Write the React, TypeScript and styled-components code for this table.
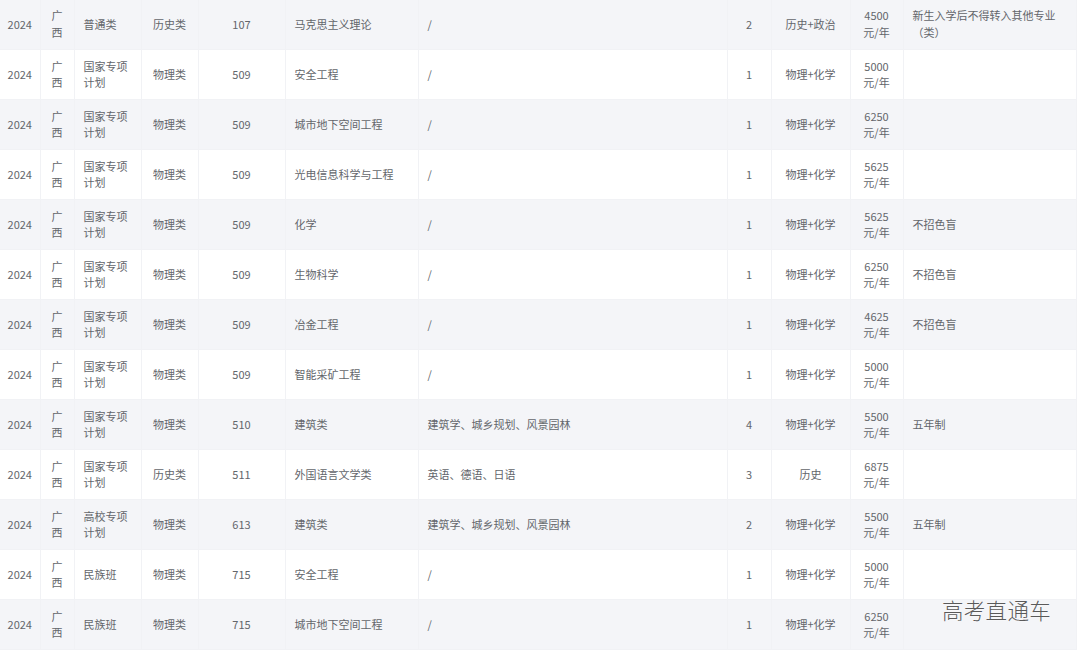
import { createGlobalStyle, styled } from "styled-components";

const GlobalStyle = createGlobalStyle`
  html, body {
    margin: 0;
    padding: 0;
    background-color: #ffffff;
  }
`;

const Page = styled.div`
  position: relative;
  width: 1080px;
  height: 651px;
  overflow: hidden;
  font-family: "Noto Sans CJK SC", "Noto Sans", sans-serif;
`;

const Table = styled.table`
  width: 1076px;
  margin-top: -1px;
  table-layout: fixed;
  border-collapse: collapse;
  font-size: 11px;
  color: #63666b;
`;

const Row = styled.tr<{ $striped: boolean }>`
  height: 50px;
  background-color: ${(p) => (p.$striped ? "#f4f5f8" : "#ffffff")};
`;

const Cell = styled.td<{ $align?: string }>`
  padding: 0 9px;
  line-height: 16.5px;
  text-align: ${(p) => p.$align || "left"};
  vertical-align: middle;
  border: 1px solid #f1f2f5;
  border-top: none;
  word-break: break-all;

  &:first-child {
    border-left: none;
  }
`;

const Narrow = styled(Cell)`
  padding: 0 4px;
`;

const Province = styled(Cell)`
  padding: 0 8px;
`;

const Watermark = styled.div`
  position: absolute;
  left: 942px;
  top: 594px;
  font-size: 21.5px;
  letter-spacing: 0.3px;
  color: #5a5a5a;
  font-weight: 300;
  text-shadow: 0 0 2px #ffffff;
`;

const widths = [40, 34, 67, 57, 87, 133, 309, 44, 79, 53, 173];

type Item = {
  type: string;
  cat: string;
  code: string;
  major: string;
  sub: string;
  count: string;
  req: string;
  fee: string;
  note: string;
};

const rows: Item[] = [
  { type: "普通类", cat: "历史类", code: "107", major: "马克思主义理论", sub: "/", count: "2", req: "历史+政治", fee: "4500", note: "新生入学后不得转入其他专业（类）" },
  { type: "国家专项计划", cat: "物理类", code: "509", major: "安全工程", sub: "/", count: "1", req: "物理+化学", fee: "5000", note: "" },
  { type: "国家专项计划", cat: "物理类", code: "509", major: "城市地下空间工程", sub: "/", count: "1", req: "物理+化学", fee: "6250", note: "" },
  { type: "国家专项计划", cat: "物理类", code: "509", major: "光电信息科学与工程", sub: "/", count: "1", req: "物理+化学", fee: "5625", note: "" },
  { type: "国家专项计划", cat: "物理类", code: "509", major: "化学", sub: "/", count: "1", req: "物理+化学", fee: "5625", note: "不招色盲" },
  { type: "国家专项计划", cat: "物理类", code: "509", major: "生物科学", sub: "/", count: "1", req: "物理+化学", fee: "6250", note: "不招色盲" },
  { type: "国家专项计划", cat: "物理类", code: "509", major: "冶金工程", sub: "/", count: "1", req: "物理+化学", fee: "4625", note: "不招色盲" },
  { type: "国家专项计划", cat: "物理类", code: "509", major: "智能采矿工程", sub: "/", count: "1", req: "物理+化学", fee: "5000", note: "" },
  { type: "国家专项计划", cat: "物理类", code: "510", major: "建筑类", sub: "建筑学、城乡规划、风景园林", count: "4", req: "物理+化学", fee: "5500", note: "五年制" },
  { type: "国家专项计划", cat: "历史类", code: "511", major: "外国语言文学类", sub: "英语、德语、日语", count: "3", req: "历史", fee: "6875", note: "" },
  { type: "高校专项计划", cat: "物理类", code: "613", major: "建筑类", sub: "建筑学、城乡规划、风景园林", count: "2", req: "物理+化学", fee: "5500", note: "五年制" },
  { type: "民族班", cat: "物理类", code: "715", major: "安全工程", sub: "/", count: "1", req: "物理+化学", fee: "5000", note: "" },
  { type: "民族班", cat: "物理类", code: "715", major: "城市地下空间工程", sub: "/", count: "1", req: "物理+化学", fee: "6250", note: "" },
];

function App() {
  return (
    <Page>
      <GlobalStyle />
      <Table>
        <colgroup>
          {widths.map((w, i) => (
            <col key={i} style={{ width: w }} />
          ))}
        </colgroup>
        <tbody>
          {rows.map((r, i) => (
            <Row key={i} $striped={i % 2 === 0}>
              <Narrow $align="center">2024</Narrow>
              <Province $align="center">广西</Province>
              <Cell>{r.type}</Cell>
              <Narrow $align="center">{r.cat}</Narrow>
              <Cell $align="center">{r.code}</Cell>
              <Cell>{r.major}</Cell>
              <Cell>{r.sub}</Cell>
              <Cell $align="center">{r.count}</Cell>
              <Narrow $align="center">{r.req}</Narrow>
              <Narrow $align="center">
                {r.fee}
                <br />
                元/年
              </Narrow>
              <Cell>{r.note}</Cell>
            </Row>
          ))}
        </tbody>
      </Table>
      <Watermark>高考直通车</Watermark>
    </Page>
  );
}

export default App;
